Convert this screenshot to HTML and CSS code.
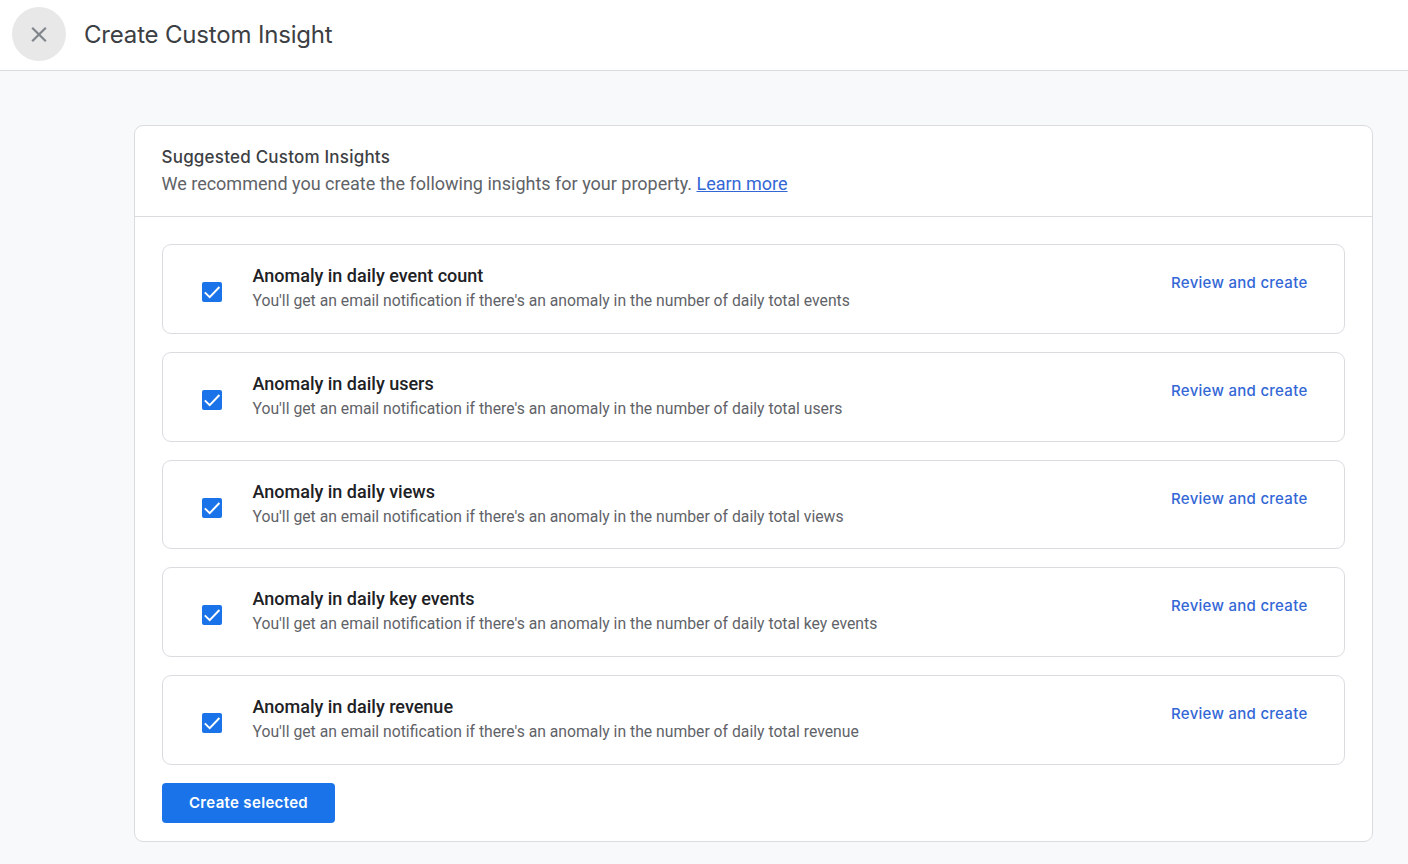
FILE: index.html
```html
<!DOCTYPE html>
<html lang="en">
	<head>
		<meta charset="UTF-8" />
		<meta name="viewport" content="width=device-width, initial-scale=1.0" />
		<title>Create Custom Insight</title>
		<link rel="stylesheet" href="styles.css">
	</head>
	<body>
		<header class="topbar">
			<button class="close" aria-label="Close">
				<svg width="18" height="18" viewBox="0 0 18 18">
					<path d="M2.2 2.7L15.8 16.3M15.8 2.7L2.2 16.3" />
				</svg>
			</button>
			<h1>Create Custom Insight</h1>
		</header>
		<main class="card">
			<div class="card-header">
				<h2>Suggested Custom Insights</h2>
				<p>We recommend you create the following insights for your property. <a href="#">Learn more</a></p>
			</div>
			<div class="card-body">
				<div class="insight">
					<span class="checkbox" role="checkbox" aria-checked="true"><svg viewBox="0 0 20 20"><path d="M2.8 10.4L7.7 15.1L17.4 5" /></svg></span>
					<div class="insight-text">
						<h3>Anomaly in daily event count</h3>
						<p>You'll get an email notification if there's an anomaly in the number of daily total events</p>
					</div>
					<a class="review" href="#">Review and create</a>
				</div>
				<div class="insight">
					<span class="checkbox" role="checkbox" aria-checked="true"><svg viewBox="0 0 20 20"><path d="M2.8 10.4L7.7 15.1L17.4 5" /></svg></span>
					<div class="insight-text">
						<h3>Anomaly in daily users</h3>
						<p>You'll get an email notification if there's an anomaly in the number of daily total users</p>
					</div>
					<a class="review" href="#">Review and create</a>
				</div>
				<div class="insight">
					<span class="checkbox" role="checkbox" aria-checked="true"><svg viewBox="0 0 20 20"><path d="M2.8 10.4L7.7 15.1L17.4 5" /></svg></span>
					<div class="insight-text">
						<h3>Anomaly in daily views</h3>
						<p>You'll get an email notification if there's an anomaly in the number of daily total views</p>
					</div>
					<a class="review" href="#">Review and create</a>
				</div>
				<div class="insight">
					<span class="checkbox" role="checkbox" aria-checked="true"><svg viewBox="0 0 20 20"><path d="M2.8 10.4L7.7 15.1L17.4 5" /></svg></span>
					<div class="insight-text">
						<h3>Anomaly in daily key events</h3>
						<p>You'll get an email notification if there's an anomaly in the number of daily total key events</p>
					</div>
					<a class="review" href="#">Review and create</a>
				</div>
				<div class="insight">
					<span class="checkbox" role="checkbox" aria-checked="true"><svg viewBox="0 0 20 20"><path d="M2.8 10.4L7.7 15.1L17.4 5" /></svg></span>
					<div class="insight-text">
						<h3>Anomaly in daily revenue</h3>
						<p>You'll get an email notification if there's an anomaly in the number of daily total revenue</p>
					</div>
					<a class="review" href="#">Review and create</a>
				</div>
				<button class="create">Create selected</button>
			</div>
		</main>
	</body>
</html>
```
FILE: styles.css
```css
* {
	box-sizing: border-box;
}
body {
	margin: 0;
	height: 864px;
	font-family: Roboto, sans-serif;
	background-color: #f8f9fb;
	color: #5f6368;
	overflow: hidden;
}
h1,
h2,
h3,
p {
	margin: 0;
	white-space: nowrap;
}
.topbar {
	display: flex;
	align-items: center;
	gap: 18px;
	height: 71px;
	padding: 0 12px 2px;
	border-bottom: 1px solid #dadce0;
	background-color: white;
}
.close {
	display: flex;
	align-items: center;
	justify-content: center;
	width: 54px;
	height: 54px;
	padding: 0;
	border: none;
	border-radius: 50%;
	background-color: #e8e8e8;
}
.close path {
	fill: none;
	stroke: #80868b;
	stroke-width: 2.2;
}
h1 {
	padding-top: 2px;
	font-family: Inter, sans-serif;
	font-size: 24px;
	font-weight: 400;
	line-height: 32px;
	letter-spacing: -0.18px;
	color: #3c4043;
}
.card {
	width: 1239px;
	height: 717px;
	margin: 54px 0 0 134px;
	border: 1px solid #dadce0;
	border-radius: 9px;
	background-color: white;
}
.card-header {
	height: 91px;
	padding: 18px 26.5px 0;
	border-bottom: 1px solid #dadce0;
}
h2 {
	font-family: Inter, sans-serif;
	font-size: 17px;
	font-weight: 500;
	line-height: 27px;
	letter-spacing: 0.21px;
	color: #3c4043;
}
.card-header p {
	font-size: 18px;
	line-height: 25px;
}
.card-header a {
	color: #3367d6;
}
.card-body {
	display: flex;
	flex-direction: column;
	align-items: flex-start;
	gap: 18px;
	padding: 27px;
}
.insight {
	display: flex;
	align-items: flex-start;
	width: 1183px;
	height: 89.75px;
	padding: 18px 36.5px 0 39px;
	border: 1px solid #dadce0;
	border-radius: 9px;
}
.checkbox {
	width: 20px;
	height: 20px;
	margin: 19px 30.5px 0 0;
	border-radius: 2px;
	background-color: #1a73e8;
}
.checkbox svg {
	display: block;
}
.checkbox path {
	fill: none;
	stroke: white;
	stroke-width: 2;
}
h3 {
	font-size: 18px;
	font-weight: 500;
	line-height: 26px;
	color: #202124;
}
.insight-text p {
	font-size: 15.74px;
	line-height: 24px;
}
.review {
	margin: 8px 0 0 auto;
	font-family: Inter, sans-serif;
	font-size: 15px;
	font-weight: 500;
	line-height: 24px;
	letter-spacing: 0.28px;
	text-decoration: none;
	color: #3367d6;
}
.create {
	width: 173px;
	height: 40px;
	padding: 0;
	border: none;
	border-radius: 4px;
	background-color: #1a73e8;
	font-family: Inter, sans-serif;
	font-size: 15px;
	font-weight: 600;
	letter-spacing: 0.33px;
	color: white;
}
```
